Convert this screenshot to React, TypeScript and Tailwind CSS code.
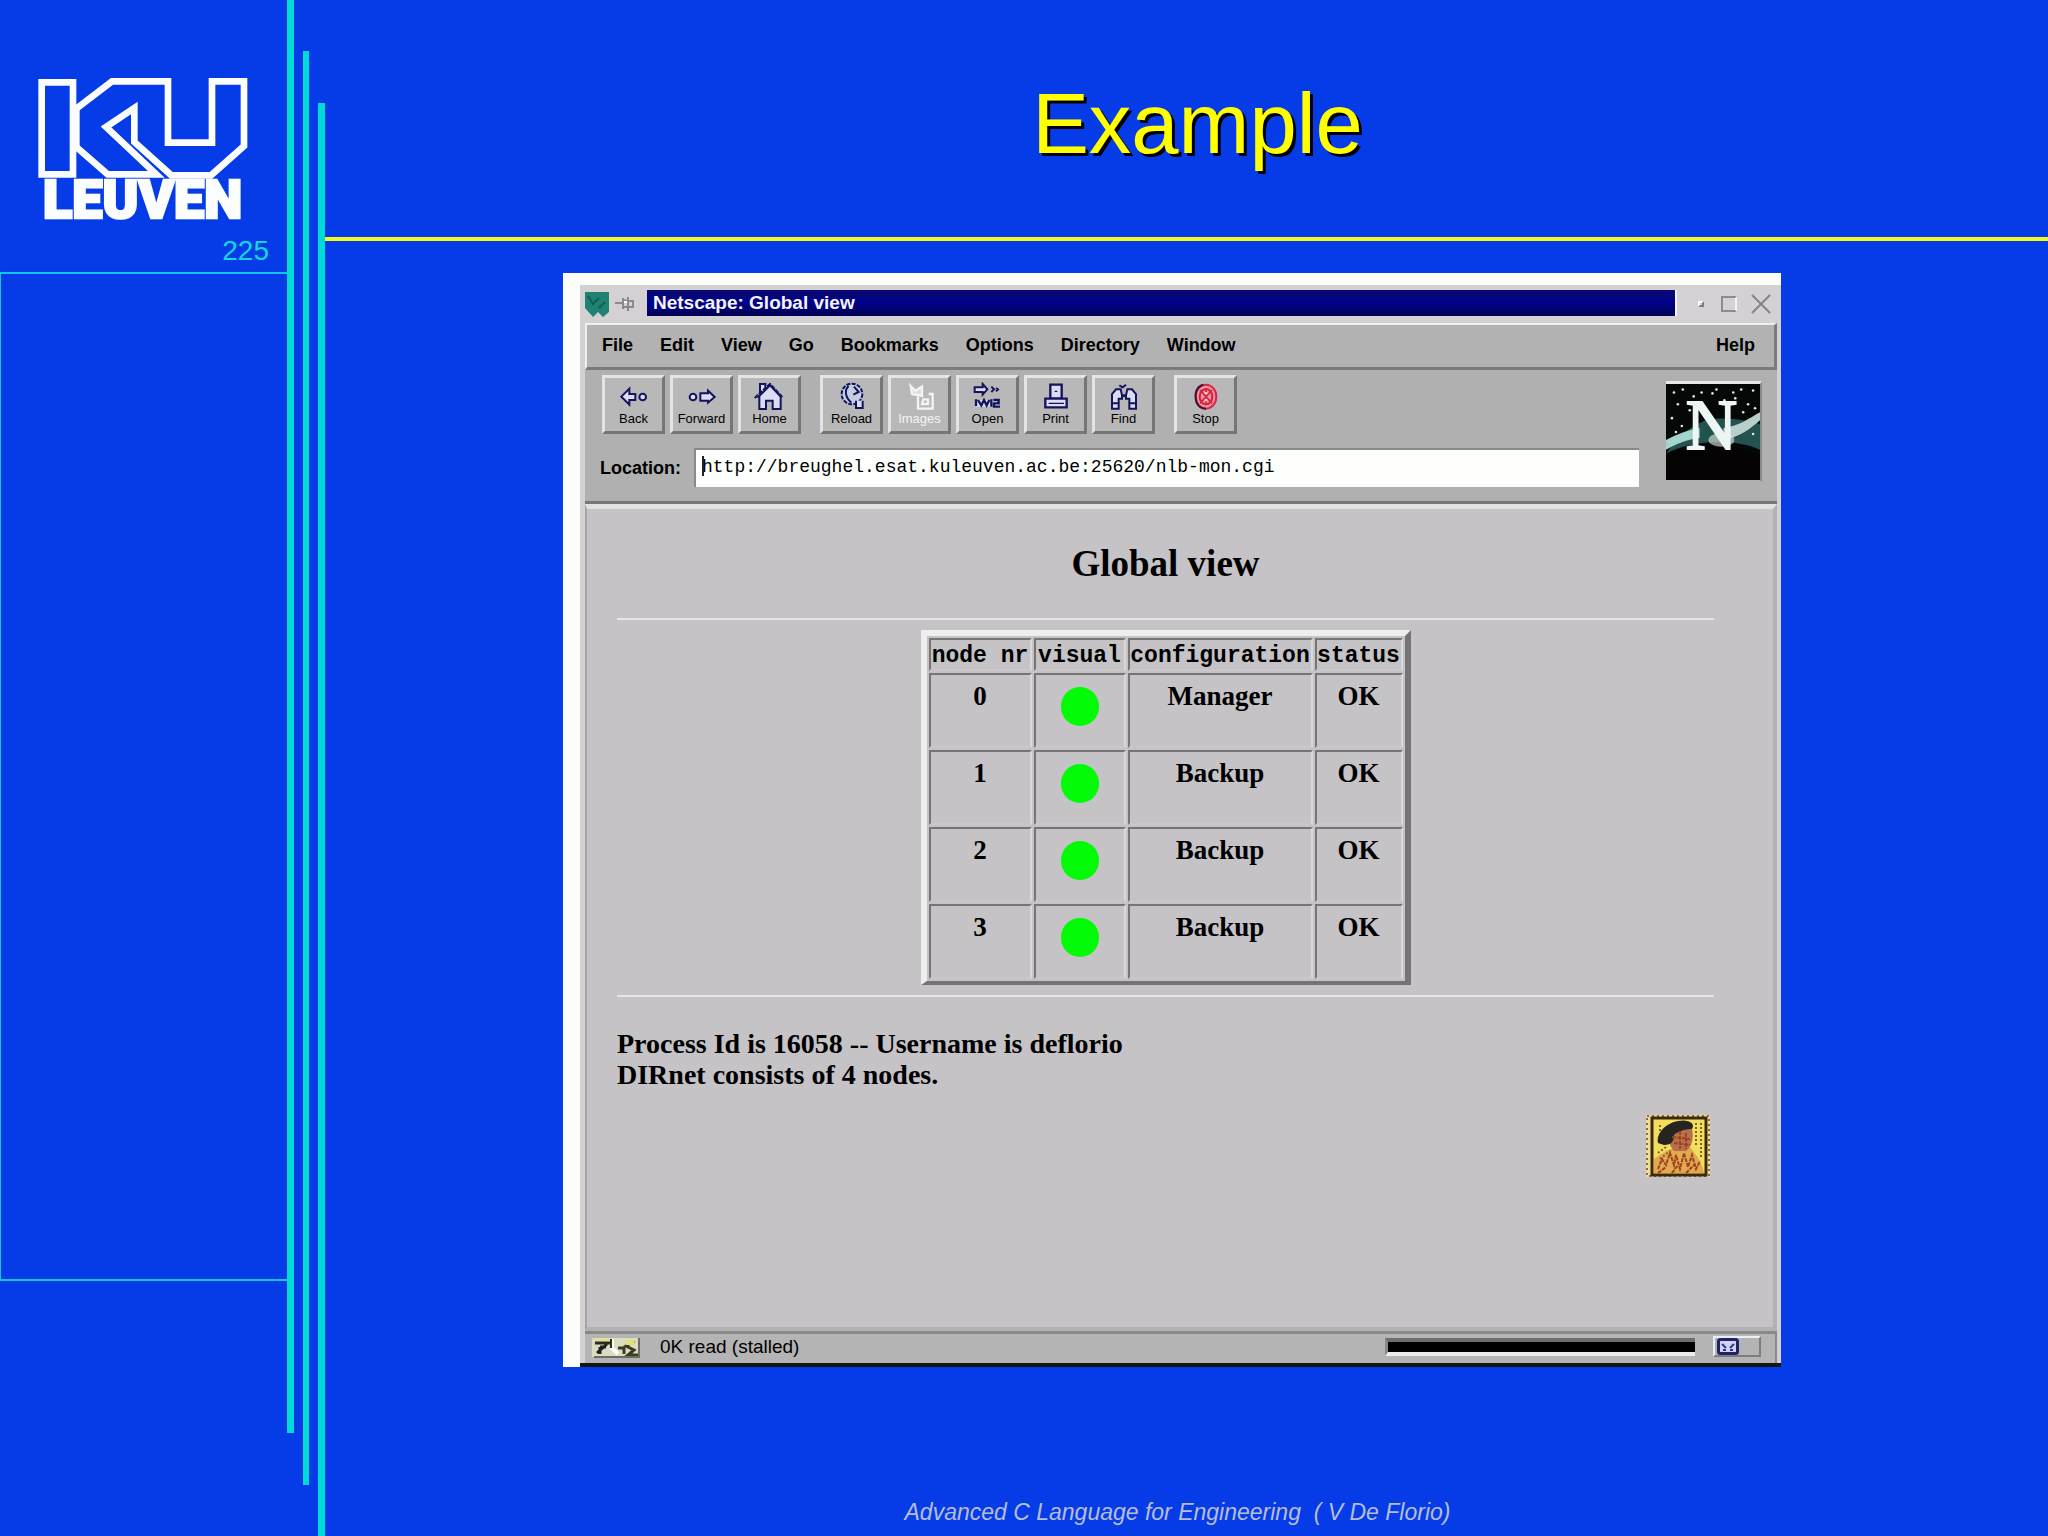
import type { ReactNode } from "react";

const NAVY = "#14145c";
const ICE = "#dcdcf4";

function KuLeuvenLogo() {
  return (
    <svg viewBox="80 230 696 480" className="h-40 w-[232px]" role="img" aria-label="KU Leuven">
      <g fill="none" stroke="#fbfdff" strokeWidth="20" strokeMiterlimit="6">
        <path d="M124 246H218V522H124Z" />
        <path d="M228 318V444" />
        <path d="M228 325L335 243H503V427H635V243H731V437L632 525H513L402 425V323L317 380L468 522H322L228 440" />
      </g>
      <text
        x="427"
        y="652"
        textAnchor="middle"
        fill="#fbfdff"
        stroke="#fbfdff"
        strokeWidth="8"
        className="font-[Roboto,sans-serif] text-[162px] font-black"
      >
        LEUVEN
      </text>
    </svg>
  );
}

function ToolIcon({ children }: { children: ReactNode }) {
  return (
    <svg viewBox="0 0 120 90" className="h-[30px] w-10" aria-hidden="true">
      {children}
    </svg>
  );
}

const icons: Record<string, ReactNode> = {
  Back: (
    <g fill={ICE} stroke={NAVY} strokeWidth="6">
      <path d="M22 44L46 20V36H64V54H46V68Z" />
      <circle cx="86" cy="45" r="10" />
    </g>
  ),
  Forward: (
    <g fill={ICE} stroke={NAVY} strokeWidth="6">
      <circle cx="33" cy="45" r="10" />
      <path d="M55 34H78V26L98 45L78 62V56H55Z" />
    </g>
  ),
  Home: (
    <g fill={ICE} stroke={NAVY} strokeWidth="6">
      <path d="M30 34V6H46V18" />
      <path d="M28 44V81H48V56H68V81H92V44L60 10L26 44Z" />
      <path d="M14 48L60 6L98 46" fill="none" strokeDasharray="14 3" />
    </g>
  ),
  Reload: (
    <g fill="none" stroke={NAVY} strokeWidth="6">
      <circle cx="60" cy="36" r="31" fill="#c3cfe0" strokeDasharray="12 4" />
      <path d="M50 12C36 24 40 46 58 62M66 14L80 30L64 38" />
      <path d="M72 56V78H92V56" fill={ICE} />
    </g>
  ),
  Images: (
    <g fill="none" stroke="#f4f4f4" strokeWidth="7">
      <path d="M32 12L46 26L66 14V42L36 36Z" fill="#dedede" />
      <path d="M54 44V80H98V36H86M66 66H84V52H70Z" />
    </g>
  ),
  Open: (
    <g fill={ICE} stroke={NAVY} strokeWidth="6">
      <path d="M20 16H44V6L58 22L44 38V30H20Z" />
      <path d="M70 14L78 22L70 30M84 18L90 22L84 28" fill="none" />
      <path d="M24 54H94V74H24Z" stroke="none" />
      <path d="M24 52V72M30 54L40 70L48 54L56 70L64 54M70 52V74M76 54H92V64H78V74H96" fill="none" strokeWidth="7" />
    </g>
  ),
  Print: (
    <g fill={ICE} stroke={NAVY} strokeWidth="7">
      <path d="M43 8H77V50H43Z" />
      <path d="M28 50H92V76H28Z" />
      <path d="M38 64H84M56 28H64" fill="none" strokeWidth="4" />
    </g>
  ),
  Find: (
    <g fill={ICE} stroke={NAVY} strokeWidth="6">
      <path d="M24 80V36L36 22H50L54 40H66L70 22H84L96 36V80H76V50H66V42H54V50H44V80Z" />
      <path d="M24 64H44M76 64H96M46 10L56 16L66 8" fill="none" />
    </g>
  ),
  Stop: (
    <g fill="none">
      <ellipse cx="60" cy="44" rx="31" ry="36" fill="#f0949c" stroke="#d8284a" strokeWidth="6" />
      <path d="M52 8C30 14 24 36 32 62C38 76 48 80 60 80" stroke="#3c1438" strokeWidth="6" />
      <ellipse cx="60" cy="44" rx="19" ry="23" stroke="#d02040" strokeWidth="6" />
      <path d="M42 24L78 64M78 24L42 64M60 20V70" stroke="#d02844" strokeWidth="5" />
      <circle cx="60" cy="34" r="4" fill="#fbd8da" />
      <circle cx="60" cy="54" r="4" fill="#fbd8da" />
    </g>
  ),
};

function ToolButton({ name }: { name: string }) {
  return (
    <button
      type="button"
      disabled={name === "Images"}
      className="flex h-[59px] w-[63px] flex-col items-center overflow-hidden border-3 border-t-[#e4e4e4] border-r-[#767676] border-b-[#767676] border-l-[#e4e4e4] bg-[#b9b8b9] pt-1 text-[13px] leading-[14px] text-black disabled:text-[#f4f4f4]"
    >
      <ToolIcon>{icons[name]}</ToolIcon>
      {name}
    </button>
  );
}

const toolGroups = [["Back", "Forward", "Home"], ["Reload", "Images", "Open", "Print", "Find"], ["Stop"]];
const menus = ["File", "Edit", "View", "Go", "Bookmarks", "Options", "Directory", "Window"];

const nodes = [
  { nr: 0, configuration: "Manager", status: "OK" },
  { nr: 1, configuration: "Backup", status: "OK" },
  { nr: 2, configuration: "Backup", status: "OK" },
  { nr: 3, configuration: "Backup", status: "OK" },
];

const stars = [
  [8, 8], [17, 5], [28, 12], [36, 8], [47, 9], [51, 5], [68, 8], [76, 5], [88, 6], [12, 20], [24, 26],
  [59, 16], [70, 14], [83, 20], [90, 24], [6, 34], [16, 42], [78, 28], [88, 50], [10, 48], [62, 24],
];

function NetscapeLogo() {
  return (
    <svg viewBox="0 0 95 96" className="h-24 w-full bg-black" role="img" aria-label="Netscape">
      <rect width="95" height="96" fill="#060808" />
      <path d="M0 70C10 56 20 44 40 36C60 32 80 36 95 40V66C70 54 24 56 0 70Z" fill="#24524f" />
      <path d="M0 56C12 50 22 46 34 44V54C20 56 10 60 0 66Z" fill="#a4d4ce" />
      <path d="M58 44C74 42 84 34 95 28V36C86 44 76 52 58 56Z" fill="#b9cfcc" />
      <path d="M0 96V72C20 60 74 60 95 72V96Z" fill="#050303" />
      {stars.map(([x, y]) => (
        <circle key={`${x}-${y}`} cx={x} cy={y} r="1.3" fill="#dfe8e8" />
      ))}
      <ellipse cx="56" cy="56" rx="13" ry="7" fill="#e4ecea" opacity=".6" />
      <text
        x="46"
        y="65"
        textAnchor="middle"
        fill="#eef6f4"
        stroke="#eef6f4"
        strokeWidth="2"
        className="font-['Liberation_Serif',serif] text-[72px]"
      >
        N
      </text>
    </svg>
  );
}

function Stamp() {
  return (
    <svg viewBox="0 0 64 62" className="h-[62px] w-16" role="img" aria-label="Author">
      <rect width="64" height="62" fill="#f0dc94" />
      <rect x="1" y="1" width="62" height="60" fill="none" stroke="#8a6c38" strokeWidth="2" strokeDasharray="2 3" />
      <rect x="6" y="3" width="54" height="57" fill="#f4de60" stroke="#3a2a10" strokeWidth="3" />
      <path d="M8 58V44L20 36L30 32H44C50 40 56 46 58 58Z" fill="#e4a850" />
      <path d="M24 14H46C48 22 46 32 40 36H28C22 30 22 20 24 14Z" fill="#b8704c" />
      <path
        d="M12 28C10 18 20 8 32 6C42 4 50 8 46 14C40 14 32 16 28 20C28 26 26 30 18 30Z"
        fill="#262420"
      />
      <path
        d="M12 54L16 44L20 50L24 38L28 50L30 40L34 54L38 38L42 52L46 40L50 54L54 46M12 58L20 52M26 58L32 50M40 58L48 50M26 22L44 24M28 28L44 30M34 16V34M40 18V34"
        fill="none"
        stroke="#9c4420"
        strokeWidth="2"
        strokeDasharray="4 1"
      />
      <path d="M12 38L20 32M14 44L24 36M50 8V30M55 8V44M14 10V18" stroke="#7c6424" strokeWidth="2" strokeDasharray="2 2" />
    </svg>
  );
}

const cell =
  "border-2 border-t-[#767476] border-l-[#767476] border-r-[#d9d8da] border-b-[#c9c7ca] align-top font-bold";

function NodeTable() {
  return (
    <table className="mx-auto mt-2.5 border-separate border-spacing-[2px] border-t-6 border-r-6 border-b-4 border-l-6 border-t-[#eeeeee] border-r-[#757375] border-b-[#757375] border-l-[#eeeeee] text-center text-[27px] leading-[31px]">
      <thead>
        <tr className="h-[33px] font-['Liberation_Mono',monospace] text-[23px] leading-[25px]">
          <th scope="col" className={`${cell} w-[103px] p-0 pt-1`}>node nr</th>
          <th scope="col" className={`${cell} w-[92px] p-0 pt-1`}>visual</th>
          <th scope="col" className={`${cell} w-[185px] p-0 pt-1`}>configuration</th>
          <th scope="col" className={`${cell} w-[88px] p-0 pt-1`}>status</th>
        </tr>
      </thead>
      <tbody>
        {nodes.map((n) => (
          <tr key={n.nr} className="h-[75px]">
            <td className={`${cell} p-0 pt-1.5`}>{n.nr}</td>
            <td className={`${cell} p-0 pt-3`}>
              <div className="mx-auto h-[39px] w-[38px] rounded-full bg-[#02fb06]" />
            </td>
            <td className={`${cell} p-0 pt-1.5`}>{n.configuration}</td>
            <td className={`${cell} p-0 pt-1.5`}>{n.status}</td>
          </tr>
        ))}
      </tbody>
    </table>
  );
}

function TitleBar() {
  return (
    <div className="flex h-[38px] items-start pt-[5px] pr-1">
      <svg viewBox="0 0 24 26" className="mt-0.5 h-[26px] w-6" aria-hidden="true">
        <path d="M0 0H24V20L18 25L13 20L8 25L0 16Z" fill="#1f8272" />
        <path d="M3 4L8 12L14 6M14 16L20 10" stroke="#0f5f56" strokeWidth="2" fill="none" />
      </svg>
      <svg viewBox="0 0 20 20" className="mt-1 ml-1.5 h-5 w-5" fill="none" stroke="#8b898b" strokeWidth="2" aria-hidden="true">
        <path d="M0 9H8M8 4V15M8 6L13 7V3M13 3V17M8 13H13M13 7H18V13H13" />
        <path d="M9 8H12" stroke="#ffffff" />
      </svg>
      <div className="ml-3 h-[26px] flex-1 border-r-2 border-r-[#f4f4fa] bg-linear-to-b from-[#0a0a6c] via-[#00008e] to-[#020250] pl-1.5 text-[19px] leading-[26px] font-bold text-[#f4f4f8]">
        Netscape: Global view
      </div>
      <div className="ml-4 flex gap-3 pt-0.5">
        <button type="button" aria-label="Minimize" className="flex h-6 w-4 items-center justify-center">
          <span className="h-1.5 w-1.5 border-2 border-t-white border-r-[#7b7b7b] border-b-[#7b7b7b] border-l-white" />
        </button>
        <button type="button" aria-label="Maximize" className="flex h-6 w-4 items-center justify-center">
          <span className="h-4 w-4 border-2 border-t-[#8b8b8b] border-r-[#f4f4f4] border-b-[#8b8b8b] border-l-[#8b8b8b]" />
        </button>
        <button type="button" aria-label="Close" className="flex h-6 w-6 items-center justify-center">
          <svg viewBox="0 0 20 20" className="h-5 w-5" stroke="#858385" strokeWidth="2" aria-hidden="true">
            <path d="M1 1L19 19M19 1L1 19" />
          </svg>
        </button>
      </div>
    </div>
  );
}

function StatusBar() {
  return (
    <div className="flex h-[32px] items-center border-t-3 border-r-2 border-t-[#8a898a] border-r-[#8a898a] bg-[#b5b4b5] pr-3.5 pb-1 pl-[7px] text-[19px] leading-[22px]">
      <svg viewBox="0 0 48 22" className="h-[22px] w-12" aria-hidden="true">
        <path d="M0 2H46V21H0Z" fill="#dcdcc0" />
        <path d="M3 7H19" stroke="#2c2c20" strokeWidth="3" />
        <path d="M4 3H18V5H4Z" fill="#e4e47c" />
        <path d="M15 8L5 17M8 11H14M8 11V18" stroke="#20201c" strokeWidth="3" />
        <path d="M20 3V12L26 18" fill="none" stroke="#fff" strokeWidth="4" />
        <path d="M19 3V12" stroke="#2c2c20" strokeWidth="2" />
        <path d="M26 12H32V18M42 5L34 10L42 14L36 19H46" fill="none" stroke="#3c3c24" strokeWidth="3" />
        <path d="M34 4H42V9H34Z" fill="#e2e278" />
        <path d="M47 2V21H2" fill="none" stroke="#6c6c64" strokeWidth="2" />
      </svg>
      <span className="ml-5">0K read (stalled)</span>
      <div className="ml-auto h-[18px] w-[310px] border-t-4 border-b-4 border-l-3 border-t-[#6f6d6f] border-b-[#ececec] border-l-[#8a888a] bg-black" />
      <button
        type="button"
        aria-label="Mail"
        className="ml-[18px] flex h-[21px] w-12 items-center border-2 border-t-[#eeeeee] border-r-[#7d7d7d] border-b-[#7d7d7d] border-l-[#eeeeee] pl-0.5"
      >
        <svg viewBox="0 0 22 17" className="h-[17px] w-[22px]" aria-hidden="true">
          <rect x="1.5" y="1.5" width="19" height="14" rx="2" fill="#d2d2f2" stroke="#20206c" strokeWidth="3" />
          <path d="M5 6L9 10M17 6L13 10M6 12H9M13 12H16" stroke="#34348c" strokeWidth="2" />
        </svg>
      </button>
    </div>
  );
}

function Browser() {
  return (
    <section className="flex flex-1 flex-col bg-[#fcfdf9] pt-3 pl-[17px] text-black">
      <div className="flex flex-1 flex-col border-b-4 border-b-[#141414] bg-[#d3d1d3] pr-1 pl-[5px]">
        <TitleBar />
        <nav className="flex h-[47px] items-center gap-[27px] border-t-2 border-r-3 border-b-3 border-l-2 border-t-[#eef0ea] border-r-[#7b7b7b] border-b-[#7b7b7b] border-l-[#eeeeee] bg-[#b3b2b3] pr-[19px] pb-0.5 pl-[15px] text-[18px] leading-5 font-bold">
          {menus.map((m) => (
            <button type="button" key={m}>
              {m}
            </button>
          ))}
          <button type="button" className="ml-auto">
            Help
          </button>
        </nav>
        <div className="flex border-b-3 border-b-[#777577] bg-[#b1b0b1] pt-[5px] pr-[15px] pb-3.5 pl-[15px]">
          <div className="flex-1">
            <div className="flex gap-[19px] pl-0.5">
              {toolGroups.map((group) => (
                <div key={group[0]} className="flex gap-[5px]">
                  {group.map((name) => (
                    <ToolButton key={name} name={name} />
                  ))}
                </div>
              ))}
            </div>
            <div className="mt-3.5 flex items-center">
              <label htmlFor="location" className="w-[94px] text-[18px] leading-5 font-bold">
                Location:
              </label>
              <div className="relative flex flex-1">
                <input
                  id="location"
                  type="text"
                  defaultValue="http://breughel.esat.kuleuven.ac.be:25620/nlb-mon.cgi"
                  className="h-[39px] flex-1 border-t-2 border-l-2 border-t-[#8a888a] border-l-[#8a888a] bg-[#fdfffd] pb-1 pl-1.5 font-['Liberation_Mono',monospace] text-[18px] outline-none"
                />
                <span className="absolute top-2 left-2 h-5 w-0.5 bg-[#222222]" />
              </div>
            </div>
          </div>
          <div className="mt-1.5 ml-[27px] h-[100px] w-24 border-t-3 border-r-2 border-t-[#e8e8e8] border-r-[#8a8a8a]">
            <NetscapeLogo />
          </div>
        </div>
        <div className="flex flex-1 flex-col border-t-5 border-r-4 border-b-4 border-l-2 border-t-[#e2e1e2] border-r-[#b3b1b3] border-b-[#b3b1b3] border-l-[#a5a3a5] bg-[#c5c3c6] pt-[35px] pr-[59px] pl-[30px] font-['Liberation_Serif',serif]">
          <h2 className="text-center text-[37px] leading-10 font-bold">Global view</h2>
          <hr className="mt-[34px] border-t-2 border-[#e6e4e7]" />
          <NodeTable />
          <hr className="mt-2.5 border-t-2 border-[#e6e4e7]" />
          <p className="mt-[31px] text-[28px] leading-[31px] font-bold">
            Process Id is 16058 -- Username is deflorio
            <br />
            DIRnet consists of 4 nodes.
          </p>
          <a href="#author" className="mt-[25px] mr-1 self-end">
            <Stamp />
          </a>
        </div>
        <StatusBar />
      </div>
    </section>
  );
}

export default function App() {
  return (
    <div className="flex min-h-screen bg-[#063ce8] font-['Liberation_Sans',sans-serif]">
      <aside className="flex w-[287px] flex-col">
        <div className="pt-[77px] pl-[27px]">
          <KuLeuvenLogo />
        </div>
        <p className="-mt-0.5 pr-[18px] text-right text-[28px] leading-8 text-[#10d8e6]">225</p>
        <div className="mt-[5px] mb-[255px] flex-1 border-t-2 border-b-2 border-l border-[#12c4ee]" />
      </aside>
      <div className="flex gap-[9px]">
        <div className="mb-[103px] w-[7px] bg-[#00dcd4]" />
        <div className="mt-[51px] mb-[51px] w-[6px] bg-[#00dcd4]" />
        <div className="mt-[103px] w-[7px] bg-[#00dcd4]" />
      </div>
      <main className="flex flex-1 flex-col">
        <header className="border-b-4 border-[#f4fa20] pt-[76px] pb-[65px] pl-[22px]">
          <h1 className="text-center text-[85px] leading-[96px] text-[#ffff00] [text-shadow:3px_3px_0_#000]">Example</h1>
        </header>
        <div className="flex flex-1 flex-col pt-8 pr-[267px] pl-[238px]">
          <Browser />
        </div>
        <footer className="pt-[131px] pr-[18px] pb-[10px] text-center text-[23px] leading-7 whitespace-pre text-[#b6bdd6] italic">
          Advanced C Language for Engineering  ( V De Florio)
        </footer>
      </main>
    </div>
  );
}
